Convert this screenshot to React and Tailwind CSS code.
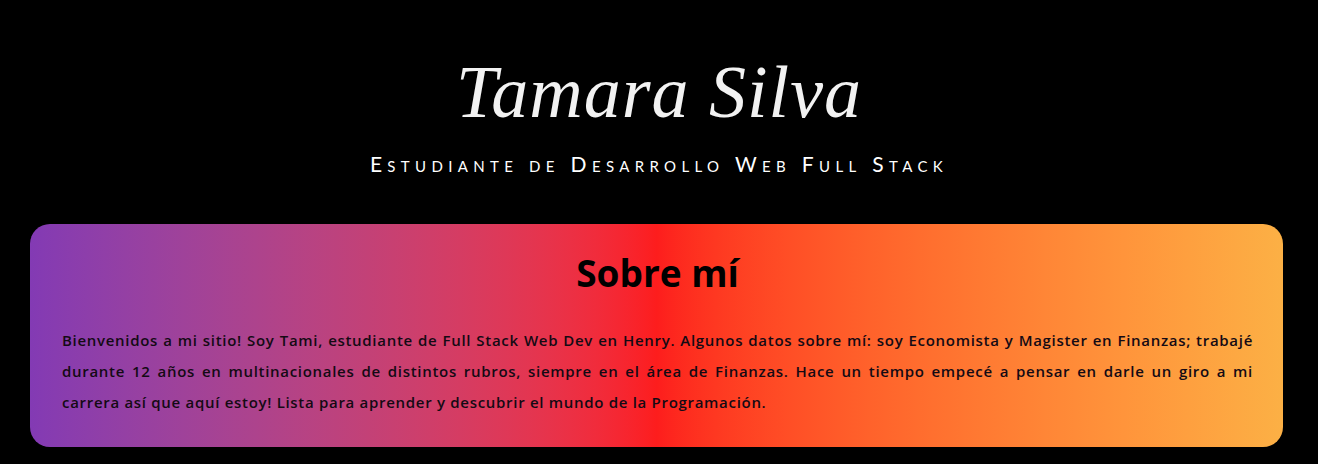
import React from 'react';

// Header with name + role
const Header = () => (
  <header className="flex flex-col items-center pt-[52px]">
    <h1 className="text-[74px] leading-[80px] italic text-[#f2f2f2] font-['Liberation_Serif',serif] tracking-[1px]">
      Tamara Silva
    </h1>
    <h2 className="mt-[18px] text-[21px] leading-[28px] text-white [font-variant:small-caps] tracking-[0.255em] font-['Lato',sans-serif]">
      Estudiante de Desarrollo Web Full Stack
    </h2>
  </header>
);

// About card
const About = () => (
  <section className="ml-[30px] mr-[35px] mt-[46px] rounded-[20px] bg-gradient-to-r from-[#833ab4] via-[#fd1d1d] to-[#fcb045] pl-[32px] pr-[30px] pt-[27px] pb-[29px]">
    <h3 className="text-center text-[37px] leading-[44px] font-bold text-black font-['Open_Sans',sans-serif]">Sobre mí</h3>
    <p className="mt-[30px] text-[15px] leading-[31px] font-semibold tracking-[0.7px] text-[#140a14] text-justify font-['Open_Sans',sans-serif]">
      Bienvenidos a mi sitio! Soy Tami, estudiante de Full Stack Web Dev en Henry. Algunos datos sobre mí: soy Economista y Magister en Finanzas; trabajé durante 12 años en multinacionales de distintos rubros, siempre en el área de Finanzas. Hace un tiempo empecé a pensar en darle un giro a mi carrera así que aquí estoy! Lista para aprender y descubrir el mundo de la Programación.
    </p>
  </section>
);

export default function App() {
  return (
    <div className="min-h-[464px] bg-black pb-[17px]">
      <Header />
      <About />
    </div>
  );
}
